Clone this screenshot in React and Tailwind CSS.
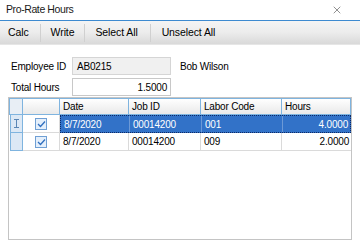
import { X } from "lucide-react";

const rows = [
  { date: "8/7/2020", job: "00014200", labor: "001", hours: "4.0000", selected: true },
  { date: "8/7/2020", job: "00014200", labor: "009", hours: "2.0000", selected: false },
];

function Check() {
  return (
    <div className="w-[12px] h-[12px] border border-[#6f9fd4] bg-[#e4effb] flex items-center justify-center">
      <svg width="9" height="8" viewBox="0 0 9 8">
        <path d="M1 4 L3.5 6.5 L8 1.5" fill="none" stroke="#2f6fbf" strokeWidth="1.3" />
      </svg>
    </div>
  );
}

function App() {
  return (
    <div
      className="w-[360px] h-[246px] bg-white text-[10px] tracking-[-0.2px] text-black overflow-hidden flex flex-col whitespace-nowrap"
      style={{ fontFamily: '"Liberation Sans", Arial, sans-serif' }}
    >
      {/* title bar */}
      <div className="h-[21px] flex items-center justify-between pl-[6px] pr-[17px] border-b border-[#3d8ad0]">
        <span className="text-[10.5px] tracking-[-0.4px] text-[#1a1a1a]">Pro-Rate Hours</span>
        <X size={12} strokeWidth={1} className="text-[#222]" />
      </div>

      {/* toolbar */}
      <div className="h-[24px] flex items-center text-[10.5px] tracking-[-0.1px] bg-gradient-to-b from-[#f4f4f4] via-[#ececec] to-[#d9d9d9] border-b border-[#e6e6e6]">
        <div className="pl-[8px] pr-[11px] h-full flex items-center">Calc</div>
        <div className="w-px h-[18px] bg-[#d0d0d0]" />
        <div className="pl-[10px] pr-[10px] h-full flex items-center">Write</div>
        <div className="w-px h-[18px] bg-[#d0d0d0]" />
        <div className="pl-[10px] pr-[12px] h-full flex items-center">Select All</div>
        <div className="w-px h-[18px] bg-[#d0d0d0]" />
        <div className="pl-[11px] h-full flex items-center">Unselect All</div>
      </div>

      {/* fields */}
      <div className="pt-[12px] pl-[11px] flex flex-col gap-[3px]">
        <div className="flex items-center h-[18px]">
          <span className="w-[61px]">Employee ID</span>
          <div className="w-[99px] h-[18px] border border-[#d5d5d5] bg-[#f0f0f0] px-[4px] flex items-center">AB0215</div>
          <span className="ml-[9px]">Bob Wilson</span>
        </div>
        <div className="flex items-center h-[18px]">
          <span className="w-[61px]">Total Hours</span>
          <div className="w-[99px] h-[18px] border border-[#c8c8c8] bg-white px-[3px] flex items-center justify-end">1.5000</div>
        </div>
      </div>

      {/* grid */}
      <div className="mt-[1px] ml-[8px] w-[344px] h-[143px] border border-[#c4c4c4] bg-white">
        <div className="flex h-[17px] border border-[#7fb4df] bg-gradient-to-b from-white to-[#e9e9e9]">
          <div className="w-[13px] border-r border-[#7fb4df] bg-[#e8eef5]" />
          <div className="w-[37px] border-r border-[#7fb4df]" />
          <div className="w-[69px] border-r border-[#7fb4df] pl-[3px] flex items-center">Date</div>
          <div className="w-[72px] border-r border-[#7fb4df] pl-[3px] flex items-center">Job ID</div>
          <div className="w-[81px] border-r border-[#7fb4df] pl-[3px] flex items-center">Labor Code</div>
          <div className="flex-1 pl-[3px] flex items-center">Hours</div>
        </div>
        {rows.map((r, i) => (
          <div key={i} className="flex h-[18px] ml-px">
            <div className="w-[13px] border border-t-0 border-[#7fb4df] bg-[#dce8f5] flex items-center justify-center">
              {r.selected && (
                <svg width="5" height="9" viewBox="0 0 5 9">
                  <path d="M0 0.5 H5 M0 8.5 H5 M2.5 0.5 V8.5" stroke="#5b86b5" strokeWidth="1" />
                </svg>
              )}
            </div>
            <div className="w-[37px] border-r border-b border-[#dadada] flex items-center justify-center">
              <Check />
            </div>
            <div
              className={
                "flex flex-1 border-b " +
                (r.selected
                  ? "bg-[#3272c8] text-white border border-dotted border-[#0c2a66]"
                  : "border-[#dadada]")
              }
            >
              <div className={"w-[69px] pl-[3px] flex items-center border-r " + (r.selected ? "border-[#6c99d6]" : "border-[#dadada]")}>{r.date}</div>
              <div className={"w-[72px] pl-[3px] flex items-center border-r " + (r.selected ? "border-[#6c99d6]" : "border-[#dadada]")}>{r.job}</div>
              <div className={"w-[81px] pl-[3px] flex items-center border-r " + (r.selected ? "border-[#6c99d6]" : "border-[#dadada]")}>{r.labor}</div>
              <div className="flex-1 pr-[2px] flex items-center justify-end">{r.hours}</div>
            </div>
          </div>
        ))}
      </div>
    </div>
  );
}

export default App;
